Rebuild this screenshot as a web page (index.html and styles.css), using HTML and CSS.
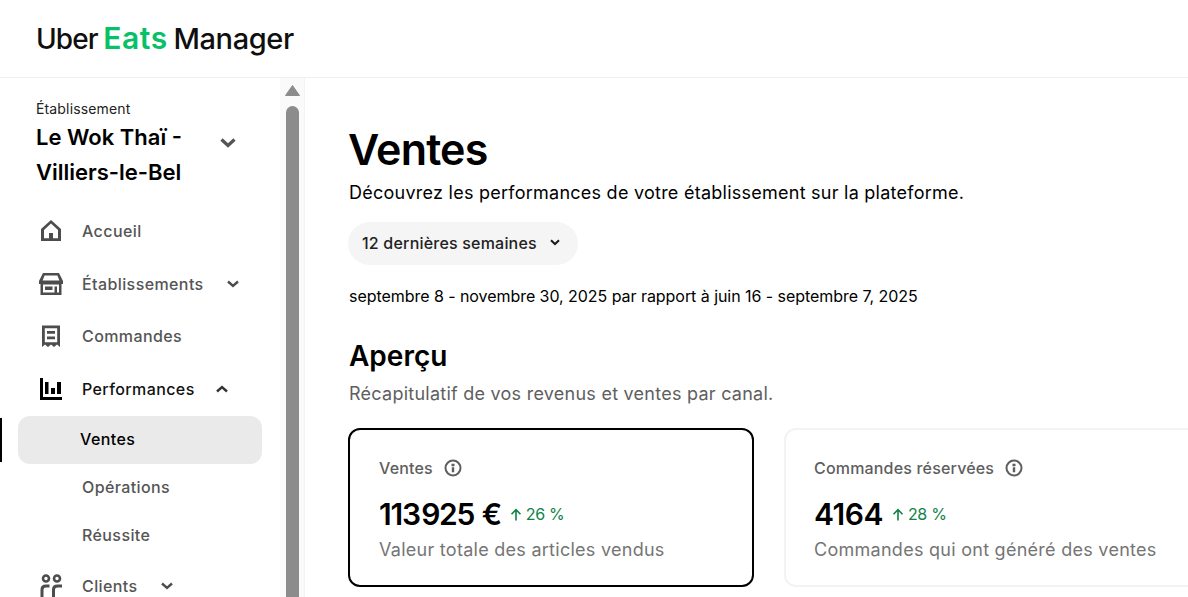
FILE: index.html
```html
<!DOCTYPE html>
<html lang="fr">
<head>
<meta charset="utf-8" />
<title>Uber Eats Manager - Ventes</title>
<link rel="stylesheet" href="styles.css">
</head>
<body>
	<header class="top">
		<div class="logo">Uber <span class="logo-eats">Eats</span> <span class="logo-man">Manager</span></div>
	</header>
	<div class="wrap">
		<aside class="side">
			<div class="side-in">
				<div class="store">
					<p class="store-label">Établissement</p>
					<div class="store-row">
						<p class="store-name">Le Wok Thaï - Villiers-le-Bel</p>
						<svg class="store-chev" width="16" height="10" viewBox="0 0 16 10"><path d="M1.5 1.5 8 7.5l6.500-6" fill="none" stroke="#555" stroke-width="3.200"/></svg>
					</div>
				</div>
				<nav class="nav">
					<a class="nav-item" href="#">
						<svg class="nav-icon" width="24" height="24" viewBox="0 0 24 24"><path fill-rule="evenodd" d="M12 1 22 10v12H2V10L12 1Zm0 3.600L5 10.900V19.300h14V10.900L12 4.600Z" fill="#4d4d4d"/><path d="M10 14h4v6h-4z" fill="#4d4d4d"/></svg>
						<span>Accueil</span>
					</a>
					<a class="nav-item" href="#">
						<svg class="nav-icon" width="24" height="24" viewBox="0 0 24 24"><path fill-rule="evenodd" d="M4 1h16l4 8v3h-1.500v11h-21V12H0V9l4-8Zm1.600 2.500L3.600 8.500h16.800l-2-5H5.600ZM4 12.500v8h16v-8H4Z" fill="#4d4d4d"/><path d="M6 14.500h7.500V18H6zM15.500 14.500H18V21h-2.500z" fill="#4d4d4d"/></svg>
						<span>Établissements</span>
						<svg class="chev" width="12" height="8" viewBox="0 0 12 8"><path d="M1 1.500 6 6l5-4.500" fill="none" stroke="#4d4d4d" stroke-width="2.400"/></svg>
					</a>
					<a class="nav-item" href="#">
						<svg class="nav-icon" width="24" height="24" viewBox="0 0 24 24"><path fill-rule="evenodd" d="M3 1.500h18V23l-3-2.500L15 23l-3-2.500L9 23l-3-2.500L3 23V1.500Zm2.800 2.800v14h12.400v-14H5.800Z" fill="#4d4d4d"/><path d="M8 7h8v2.800H8zM8 12.500h8v2.800H8z" fill="#4d4d4d"/></svg>
						<span>Commandes</span>
					</a>
					<a class="nav-item on" href="#">
						<svg class="nav-icon" width="24" height="24" viewBox="0 0 24 24"><path d="M1 1h3v19h19v3H1V1Zm5 4h3.500v12H6V5Zm6 6h4v6h-4v-6Zm6-6h4v12h-4V5Z" fill="#000"/></svg>
						<span>Performances</span>
						<svg class="chev" width="12" height="8" viewBox="0 0 12 8"><path d="M1 6.500 6 2l5 4.500" fill="none" stroke="#333" stroke-width="2.400"/></svg>
					</a>
					<a class="sub-item active" href="#">Ventes</a>
					<a class="sub-item" href="#">Opérations</a>
					<a class="sub-item" href="#">Réussite</a>
					<a class="nav-item" href="#">
						<svg class="nav-icon" width="24" height="24" viewBox="0 0 24 24"><circle cx="7" cy="4.500" r="3" fill="none" stroke="#4d4d4d" stroke-width="2.600"/><circle cx="18" cy="4.500" r="3" fill="none" stroke="#4d4d4d" stroke-width="2.600"/><path d="M3 24v-8.500Q3 12 7 12h3.500M14.500 24v-8.500q0-3.500 4-3.500H23" fill="none" stroke="#4d4d4d" stroke-width="3"/></svg>
						<span>Clients</span>
						<svg class="chev" width="12" height="8" viewBox="0 0 12 8"><path d="M1 1.500 6 6l5-4.500" fill="none" stroke="#4d4d4d" stroke-width="2.400"/></svg>
					</a>
				</nav>
			</div>
			<div class="scroll">
				<svg class="scroll-up" width="15" height="11" viewBox="0 0 15 11"><path d="M7.500 0.500 14.500 10.500H0.500Z" fill="#8c8c8c" stroke="#8c8c8c" stroke-linejoin="round"/></svg>
				<div class="scroll-thumb"></div>
			</div>
		</aside>
		<main class="main">
			<h1>Ventes</h1>
			<p class="lead">Découvrez les performances de votre établissement sur la plateforme.</p>
			<button class="range">12 dernières semaines
				<svg width="10" height="7" viewBox="0 0 10 7"><path d="M1 1.200 5 5l4-3.800" fill="none" stroke="#1a1a1a" stroke-width="2"/></svg>
			</button>
			<p class="dates">septembre 8 - novembre 30, 2025 par rapport à juin 16 - septembre 7, 2025</p>
			<h2>Aperçu</h2>
			<p class="recap">Récapitulatif de vos revenus et ventes par canal.</p>
			<div class="cards">
				<div class="card card-on">
					<div class="card-title">Ventes
						<svg width="18" height="18" viewBox="0 0 18 18"><circle cx="9" cy="9" r="7.500" fill="none" stroke="#5e5e5e" stroke-width="2"/><path d="M7.500 4.800h3v2.400h-3zM7.800 8.300h2.400v5H7.800z" fill="#5e5e5e"/></svg>
					</div>
					<div class="card-num"><strong class="num-tight">113&#8202;925 €</strong>
						<span class="up"><svg width="12" height="13" viewBox="0 0 12 13"><path d="M6 12.500V2M1.500 6.200 6 1.700l4.500 4.500" fill="none" stroke="#0e8345" stroke-width="1.600"/></svg>26 %</span>
					</div>
					<p class="card-sub">Valeur totale des articles vendus</p>
				</div>
				<div class="card card-off">
					<div class="card-title">Commandes réservées
						<svg width="18" height="18" viewBox="0 0 18 18"><circle cx="9" cy="9" r="7.500" fill="none" stroke="#5e5e5e" stroke-width="2"/><path d="M7.500 4.800h3v2.400h-3zM7.800 8.300h2.400v5H7.800z" fill="#5e5e5e"/></svg>
					</div>
					<div class="card-num"><strong>4164</strong>
						<span class="up"><svg width="12" height="13" viewBox="0 0 12 13"><path d="M6 12.500V2M1.500 6.200 6 1.700l4.500 4.500" fill="none" stroke="#0e8345" stroke-width="1.600"/></svg>28 %</span>
					</div>
					<p class="card-sub">Commandes qui ont généré des ventes</p>
				</div>
			</div>
		</main>
	</div>
</body>
</html>
```

FILE: styles.css
```css
*{margin: 0;padding: 0;box-sizing: border-box;}
html,body {height: 100%;overflow: hidden;}
body{background-color: #fff;color: #000;font-family: Inter,"Liberation Sans",sans-serif;}
a{text-decoration: none;color: inherit;}

.top {height: 78px;border-bottom: 1px solid #f0f0f0;padding: 20px 0 0 36px;}
.logo {font-size: 28px;line-height: 36px;font-weight: 500;letter-spacing: -0.9px;word-spacing: -1px;color: #0f0f0f;white-space: nowrap;}
.logo-eats {font-size: 30px;font-weight: 600;letter-spacing: 0.600px;color: #06c167;}
.logo-man {font-size: 29px;letter-spacing: -0.400px;}

.wrap {display: flex;height: 519px;overflow: hidden;}
.side {width: 305px;flex: none;display: flex;border-right: 1px solid #f3f3f3;}
.side-in {width: 280px;flex: none;position: relative;}
.store {padding: 22px 0 0 36px;}
.store-label {font-size: 14px;line-height: 18px;letter-spacing: 0.150px;color: #222;}
.store-row {display: flex;align-items: flex-start;}
.store-name {width: 161px;font-size: 22px;line-height: 35px;font-weight: 600;margin-top: 2px;}
.store-chev {margin: 20px 0 0 23px;}

.nav {margin-top: 15px;}
.nav-item {display: flex;align-items: center;height: 52.500px;padding-left: 39px;font-size: 16px;font-weight: 500;letter-spacing: 0.400px;color: #555;}
.nav-item.on {color: #111;}
.nav-icon {flex: none;margin-right: 19px;}
.chev {margin-left: 23px;}
.nav-item.on .chev {margin-left: 21px;}
.sub-item {display: flex;align-items: center;height: 48px;margin: 0 18px;padding: 0 0 2px 64px;font-size: 16px;font-weight: 500;letter-spacing: 0.400px;color: #555;border-radius: 12px;}
.sub-item.active {margin-top: 1px;padding-left: 62px;background-color: #eaeaea;color: #000;position: relative;}
.sub-item.active:before {content: "";position: absolute;left: -18px;top: 2px;bottom: 2px;width: 2px;background-color: #000;}

.scroll {flex: 1;background-color: #fafafa;display: flex;flex-direction: column;align-items: center;padding: 7px 0 0 1px;}
.scroll-thumb {width: 13px;flex: 1;margin-top: 10px;background-color: #8c8c8c;border-radius: 7px 7px 0 0;}

.main {flex: 1;padding: 45px 0 0 43px;min-width: 0;}
h1 {font-size: 43px;line-height: 52px;font-weight: 600;letter-spacing: -0.8px;}
.lead {font-size: 18px;line-height: 28px;letter-spacing: 0.250px;margin: 4px 0 0 1px;}
.range {display: flex;align-items: center;gap: 13px;height: 43px;margin-top: 15px;padding: 0 18px 2px 14px;border: 0;border-radius: 22px;background-color: #f5f5f5;font-family: inherit;font-size: 16px;font-weight: 500;letter-spacing: 0.200px;color: #222;}
.dates {font-size: 16px;line-height: 24px;letter-spacing: -0.050px;margin: 19px 0 0 1px;}
h2 {font-size: 28px;line-height: 36px;font-weight: 600;margin: 30px 0 0 1px;}
.recap {font-size: 18px;line-height: 28px;letter-spacing: 0.250px;margin: 6px 0 0 1px;color: #5e5e5e;}

.cards {display: flex;gap: 30px;margin-top: 20px;}
.card {flex: none;width: 406px;height: 159px;padding: 27px 29px;border: 2px solid #000;border-radius: 12px;}
.card-off {width: 440px;padding-left: 28px;border-color: #f3f3f3;}
.card-title {display: flex;align-items: center;gap: 11px;height: 22px;font-size: 16px;font-weight: 500;letter-spacing: 0.180px;color: #5e5e5e;}
.card-num {display: flex;align-items: center;gap: 9px;height: 36px;margin-top: 17px;}
.card-num strong {font-size: 30px;font-weight: 600;letter-spacing: -0.5px;}
.card-num .num-tight {letter-spacing: -1.200px;word-spacing: 1px;}
.up {display: flex;align-items: center;gap: 4px;font-size: 16px;font-weight: 400;letter-spacing: -0.300px;color: #0e8345;}
.card-sub {font-size: 18px;line-height: 28px;letter-spacing: 0.270px;margin-top: 4px;color: #757575;}
```
